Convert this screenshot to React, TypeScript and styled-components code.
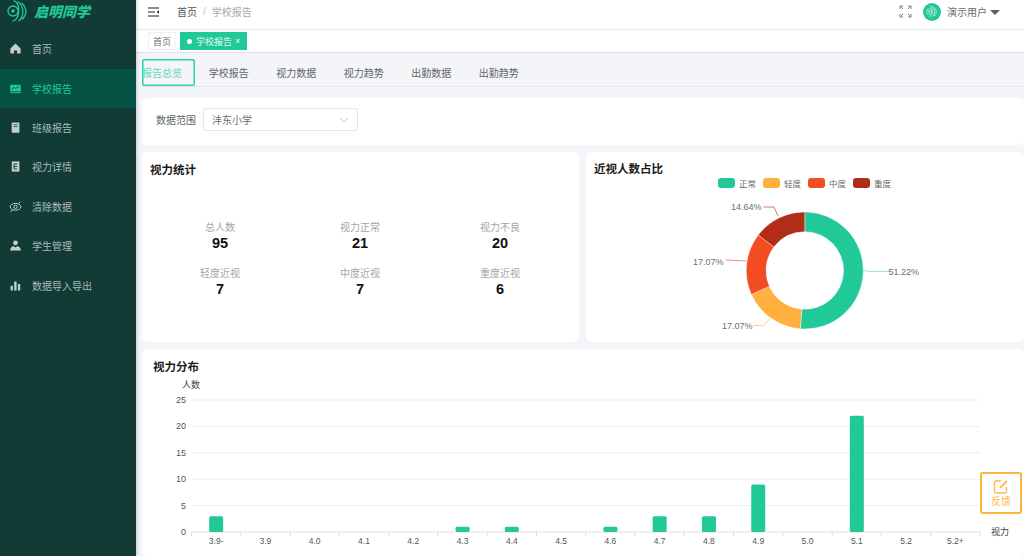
import React from "react";
import styled, { createGlobalStyle } from "styled-components";

const GlobalStyle = createGlobalStyle`
  html, body {
    margin: 0;
    padding: 0;
    height: 100%;
    overflow: hidden;
    background: #f3f5f9;
    font-family: "Liberation Sans", "Noto Sans CJK SC", sans-serif;
  }
  * { box-sizing: border-box; }
`;

const Layout = styled.div`
  display: flex;
  width: 1024px;
  height: 556px;
  overflow: hidden;
`;

const Sidebar = styled.aside`
  position: relative;
  z-index: 1;
  flex: 0 0 136px;
  height: 100%;
  background: #123b35;
  box-shadow: 1px 0 3px rgba(0, 21, 41, 0.2);
`;

const Logo = styled.div`
  display: flex;
  align-items: center;
  height: 29.6px;
  padding: 0 0 7px 7px;
  gap: 3px;
`;

const LogoText = styled.span`
  font-size: 14px;
  font-weight: 900;
  font-style: italic;
  color: #20c997;
`;

const MenuList = styled.nav`
  display: flex;
  flex-direction: column;
`;

const MenuItem = styled.div<{ $active?: boolean }>`
  display: flex;
  align-items: center;
  height: 39.4px;
  padding: 0 0 1px 9px;
  gap: 10px;
  font-size: 10px;
  color: ${(p) => (p.$active ? "#20c997" : "#a9bcb9")};
  background: ${(p) => (p.$active ? "#055244" : "transparent")};
  svg { flex: 0 0 13px; }
`;

const Main = styled.div`
  flex: 1;
  min-width: 0;
  display: flex;
  flex-direction: column;
  height: 100%;
`;

const Header = styled.header`
  flex: 0 0 30px;
  display: flex;
  align-items: center;
  justify-content: space-between;
  background: #fff;
  border-bottom: 1px solid #e8eaee;
  padding: 0 24px 6px 12px;
`;

const Crumbs = styled.div`
  display: flex;
  align-items: center;
  font-size: 10px;
  color: #505a5e;
  svg { margin-right: 17px; }
`;

const CrumbSep = styled.span`
  margin: 0 6px;
  color: #b6babd;
`;

const CrumbCurrent = styled.span`
  color: #a4a8ac;
`;

const UserBox = styled.div`
  display: flex;
  align-items: center;
  font-size: 10px;
  color: #666d70;
`;

const Avatar = styled.span`
  display: flex;
  align-items: center;
  justify-content: center;
  width: 18px;
  height: 18px;
  border-radius: 50%;
  background: #20c997;
  margin: 0 6px 0 11px;
`;

const Caret = styled.span`
  width: 0;
  height: 0;
  margin-left: 3px;
  margin-top: 2px;
  border-left: 5px solid transparent;
  border-right: 5px solid transparent;
  border-top: 5px solid #5a6063;
`;

const TagBar = styled.div`
  flex: 0 0 23px;
  display: flex;
  align-items: center;
  gap: 4px;
  padding: 0 0 0 12px;
  background: #fff;
  border-bottom: 1px solid #dfe2e6;
`;

const Tag = styled.div<{ $active?: boolean }>`
  display: flex;
  align-items: center;
  height: 18px;
  padding: 0 ${(p) => (p.$active ? "6px" : "4px")};
  font-size: 9px;
  color: ${(p) => (p.$active ? "#e7fbf5" : "#666d70")};
  background: ${(p) => (p.$active ? "#20c997" : "#fff")};
  border: 1px solid ${(p) => (p.$active ? "#20c997" : "#eef0f2")};
`;

const TagDot = styled.span`
  width: 5px;
  height: 5px;
  border-radius: 50%;
  background: #fff;
  margin-right: 4px;
`;

const TagClose = styled.span`
  margin-left: 3px;
  font-size: 9px;
  line-height: 1;
`;

const TabBar = styled.div`
  flex: 0 0 28px;
  display: flex;
  align-items: stretch;
  margin: 6px 0 0 6px;
  border-bottom: 1px solid #e4e7ec;
`;

const Tab = styled.div<{ $active?: boolean }>`
  display: flex;
  align-items: center;
  justify-content: ${(p) => (p.$active ? "flex-start" : "center")};
  width: ${(p) => (p.$active ? "53px" : "67.5px")};
  font-size: 10px;
  color: ${(p) => (p.$active ? "#5fd9b7" : "#5f6568")};
  border-radius: 2px;
  ${(p) => p.$active && "box-shadow: inset 0 0 0 1.5px #2ed3a5;"}
`;

const Content = styled.div`
  flex: 1;
  min-height: 0;
  display: flex;
  flex-direction: column;
  gap: 7px;
  padding: 11px 0 0 6px;
  overflow: hidden;
`;

const Card = styled.section`
  background: #fff;
  border-radius: 5px;
`;

const FilterCard = styled(Card)`
  flex: 0 0 47px;
  display: flex;
  align-items: center;
  gap: 7px;
  padding: 0 0 4px 14px;
  font-size: 10px;
  color: #5f6568;
`;

const Select = styled.div`
  display: flex;
  align-items: center;
  justify-content: space-between;
  width: 155px;
  height: 23px;
  padding: 0 8px 0 8px;
  border: 1px solid #e3e6ea;
  border-radius: 3px;
  color: #666d70;
`;

const Row = styled.div`
  flex: 0 0 190px;
  display: grid;
  grid-template-columns: 437px 438px;
  gap: 7px;
`;

const CardTitle = styled.h3`
  margin: 0;
  font-size: 11.5px;
  font-weight: 700;
  line-height: 16px;
  color: #1a1a1a;
`;

const StatsCard = styled(Card)`
  padding: 10px 8px;
`;

const StatsGrid = styled.div`
  display: grid;
  grid-template-columns: repeat(3, 140px);
  justify-content: start;
  row-gap: 14px;
  margin: 43px 0 0 -8px;
  padding-left: 8px;
`;

const Stat = styled.div`
  display: flex;
  flex-direction: column;
  align-items: center;
`;

const StatLabel = styled.span`
  font-size: 10px;
  line-height: 13px;
  color: #a6a6a6;
`;

const StatValue = styled.span`
  font-size: 14.5px;
  font-weight: 700;
  line-height: 19px;
  color: #111;
`;

const PieCard = styled(Card)`
  position: relative;
  padding: 9px 8px;
`;

const PieChart = styled.svg`
  position: absolute;
  left: 0;
  top: 0;
`;

const ChartCard = styled(Card)`
  flex: 1;
  min-height: 0;
  padding: 10px 11px;
  position: relative;
`;

const BarChart = styled.svg`
  position: absolute;
  left: 0;
  top: 0;
`;

const Feedback = styled.div`
  position: fixed;
  left: 980px;
  top: 472px;
  width: 42px;
  height: 42px;
  display: flex;
  flex-direction: column;
  align-items: center;
  justify-content: center;
  gap: 1px;
  background: #fff;
  border: 2px solid #fbb53c;
  border-radius: 3px;
  color: #fdb94a;
  font-size: 10px;
  line-height: 12px;
`;

const GREEN = "#20c997";

const menu = [
  { label: "首页", icon: "home" },
  { label: "学校报告", icon: "school", active: true },
  { label: "班级报告", icon: "book" },
  { label: "视力详情", icon: "detail" },
  { label: "清除数据", icon: "eye" },
  { label: "学生管理", icon: "user" },
  { label: "数据导入导出", icon: "bars" },
];

const tabs = ["学校报告", "视力数据", "视力趋势", "出勤数据", "出勤趋势"];

const stats = [
  { label: "总人数", value: 95 },
  { label: "视力正常", value: 21 },
  { label: "视力不良", value: 20 },
  { label: "轻度近视", value: 7 },
  { label: "中度近视", value: 7 },
  { label: "重度近视", value: 6 },
];

const MenuIcon = ({ name, color }: { name: string; color: string }) => {
  const p = { width: 13, height: 13, viewBox: "0 0 13 13", fill: color };
  switch (name) {
    case "home":
      return (
        <svg {...p}>
          <path d="M6.5 1.6 1.4 6.4v5.2h3.5V8.4h3.2v3.2h3.5V6.4z" />
        </svg>
      );
    case "school":
      return (
        <svg {...p}>
          <path d="M1.2 2.8h10.6v6.6H1.2z" />
          <path d="M1.2 10.2h10.6v1H1.2z" />
          <path d="M2.6 7.4 5 5.3l1.6 1.2 3.6-2.2" fill="none" stroke="#055244" strokeWidth="0.9" />
        </svg>
      );
    case "book":
      return (
        <svg {...p}>
          <path d="M3 1.5h7.4v10.2H3.6c-.5 0-.9-.4-.9-.9V1.8z" />
          <path d="M4.6 3.8h4M4.6 5.6h4" stroke="#123b35" strokeWidth="0.7" />
        </svg>
      );
    case "detail":
      return (
        <svg {...p}>
          <path d="M2.8 1.4h7.6v10.2H2.8z" />
          <path d="M5 4h3.2M5 6.5h3.2M5 9h3.2M5 4v5" stroke="#123b35" strokeWidth="0.9" fill="none" />
        </svg>
      );
    case "eye":
      return (
        <svg {...p} fill="none" stroke={color} strokeWidth="1">
          <ellipse cx="6.5" cy="6.8" rx="5.3" ry="3.4" />
          <circle cx="6.5" cy="6.8" r="1.7" />
          <path d="M11.4 1.8 9.6 3.6M3.4 10 1.6 11.8" />
        </svg>
      );
    case "user":
      return (
        <svg {...p}>
          <circle cx="6.5" cy="3.8" r="2.4" />
          <path d="M1 11.6c.4-3 2-4.4 3.6-4.6l1.9 1.4L8.4 7c1.6.2 3.2 1.6 3.6 4.6z" />
        </svg>
      );
    default:
      return (
        <svg {...p}>
          <path d="M1.6 6.8h2.3v4.7H1.6zM5.2 2.6h2.4v8.9H5.200zM8.900 5h2.300v6.500H8.900z" />
        </svg>
      );
  }
};

// concentric ring and the fish-shaped arcs of the brand mark
const LogoMark = ({ size, color }: { size: number; color: string }) => (
  <svg width={size} height={size} viewBox="0 0 24 24" fill="none" stroke={color} strokeWidth="1.3">
    <circle cx="6" cy="12" r="5" />
    <circle cx="6" cy="12" r="1.8" fill={color} stroke="none" />
    <path d="M6.5 1.5c6.5 2.5 8 17 -1 21" />
    <path d="M10.5 2.5c6.5 4 7.5 15 1 19.5" />
    <path d="M14.5 4c5.5 4.500 6 11.500 .5 16.500" />
  </svg>
);

const donut = [
  { label: "正常", color: "#20c997", value: 51.22 },
  { label: "轻度", color: "#ffb03f", value: 17.07 },
  { label: "中度", color: "#f24c22", value: 17.07 },
  { label: "重度", color: "#b12d18", value: 14.64 },
];

const polar = (cx: number, cy: number, r: number, pct: number) => {
  const a = (pct / 100) * Math.PI * 2;
  return [cx + r * Math.sin(a), cy - r * Math.cos(a)];
};

const arcPath = (from: number, to: number) => {
  const cx = 218.8;
  const cy = 118.5;
  const R = 58.5;
  const r = 38.8;
  const [x1, y1] = polar(cx, cy, R, from);
  const [x2, y2] = polar(cx, cy, R, to);
  const [x3, y3] = polar(cx, cy, r, to);
  const [x4, y4] = polar(cx, cy, r, from);
  const large = to - from > 50 ? 1 : 0;
  return `M${x1} ${y1}A${R} ${R} 0 ${large} 1 ${x2} ${y2}L${x3} ${y3}A${r} ${r} 0 ${large} 0 ${x4} ${y4}Z`;
};

const Donut = () => {
  let acc = 0;
  const segs = donut.map((d) => {
    const s = { ...d, from: acc, to: acc + d.value };
    acc += d.value;
    return s;
  });
  const legendX = [132, 177, 222, 267];
  return (
    <PieChart width={438} height={190} viewBox="0 0 438 190">
      {donut.map((d, i) => (
        <g key={d.label}>
          <rect x={legendX[i]} y={26} width={17} height={10} rx={3} fill={d.color} />
          <text x={legendX[i] + 21} y={34.5} fontSize={8.5} fill="#666">
            {d.label}
          </text>
        </g>
      ))}
      {segs.map((s) => (
        <path key={s.label} d={arcPath(s.from, s.to)} fill={s.color} stroke="#fff" strokeWidth="0.4" />
      ))}
      <path d="M277 118.5l7 1h19" fill="none" stroke="#7fe0c5" strokeWidth="0.8" />
      <text x={302.5} y={123} fontSize={9} fill="#6e6e6e">51.22%</text>
      <path d="M185.5 165l-8 8.5h-10" fill="none" stroke="#ffc56f" strokeWidth="0.8" />
      <text x={136} y={177} fontSize={9} fill="#6e6e6e">17.07%</text>
      <path d="M160.5 109l-20-1h-1" fill="none" stroke="#f0765a" strokeWidth="0.8" />
      <text x={107} y={113} fontSize={9} fill="#6e6e6e">17.07%</text>
      <path d="M192 64l-4-9h-10.5" fill="none" stroke="#c85a48" strokeWidth="0.8" />
      <text x={145} y={58} fontSize={9} fill="#6e6e6e">14.64%</text>
    </PieChart>
  );
};

const categories = ["3.9-", "3.9", "4.0", "4.1", "4.2", "4.3", "4.4", "4.5", "4.6", "4.7", "4.8", "4.9", "5.0", "5.1", "5.2", "5.2+"];
const counts = [3, 0, 0, 0, 0, 1, 1, 0, 1, 3, 3, 9, 0, 22, 0, 0];

const Bars = () => {
  // svg origin sits on the card's top-left corner (142, 349)
  const left = 49.5;
  const right = 838;
  const top = 51;
  const base = 183;
  const step = (right - left) / categories.length;
  const unit = (base - top) / 25;
  return (
    <BarChart width={882} height={207} viewBox="0 0 882 207">
      <text x={40} y={39} fontSize={9} fill="#444">人数</text>
      {[0, 5, 10, 15, 20, 25].map((v) => {
        const y = base - v * unit;
        return (
          <g key={v}>
            <text x={44} y={y + 3} fontSize={9} textAnchor="end" fill="#555">{v}</text>
            {v > 0 && <line x1={left} x2={right} y1={y} y2={y} stroke="#eceef5" strokeWidth="1" />}
          </g>
        );
      })}
      <line x1={left} x2={right} y1={base} y2={base} stroke="#dcdfe2" strokeWidth="1" />
      {categories.map((c, i) => (
        <g key={c}>
          <line x1={left + i * step} x2={left + i * step} y1={base} y2={base + 4} stroke="#dcdfe2" />
          <text x={left + (i + 0.5) * step} y={base + 12} fontSize={8.5} textAnchor="middle" fill="#555">{c}</text>
          {counts[i] > 0 && (
            <rect
              x={left + (i + 0.5) * step - 7}
              y={base - counts[i] * unit}
              width={14}
              height={counts[i] * unit}
              rx={1.5}
              fill={GREEN}
            />
          )}
        </g>
      ))}
      <line x1={right} x2={right} y1={base} y2={base + 4} stroke="#dcdfe2" />
      <text x={849} y={186} fontSize={9} fill="#444">视力</text>
    </BarChart>
  );
};

export default function App() {
  return (
    <>
      <GlobalStyle />
      <Layout>
        <Sidebar>
          <Logo>
            <LogoMark size={24} color={GREEN} />
            <LogoText>启明同学</LogoText>
          </Logo>
          <MenuList>
            {menu.map((m) => (
              <MenuItem key={m.label} $active={m.active}>
                <MenuIcon name={m.icon} color={m.active ? GREEN : "#c3d0ce"} />
                {m.label}
              </MenuItem>
            ))}
          </MenuList>
        </Sidebar>
        <Main>
          <Header>
            <Crumbs>
              <svg width="12" height="12" viewBox="0 0 12 12" fill="#222">
                <path d="M0 1.5h11v1.100H0zM0 5.500h7v1.100H0zM0 9.500h11v1.100H0zM11 4.300v3.400L8.600 6z" />
              </svg>
              首页
              <CrumbSep>/</CrumbSep>
              <CrumbCurrent>学校报告</CrumbCurrent>
            </Crumbs>
            <UserBox>
              <svg width="13" height="13" viewBox="0 0 13 13" fill="none" stroke="#777" strokeWidth="0.9">
                <path d="M1 4V1h3M1 1l3 3M12 4V1H9M12 1 9 4M1 9v3h3M1 12l3-3M12 9v3H9M12 12 9 9" />
              </svg>
              <Avatar>
                <LogoMark size={13} color="#d6f7ec" />
              </Avatar>
              演示用户
              <Caret />
            </UserBox>
          </Header>
          <TagBar>
            <Tag>首页</Tag>
            <Tag $active>
              <TagDot />
              学校报告
              <TagClose>×</TagClose>
            </Tag>
          </TagBar>
          <TabBar>
            <Tab $active>报告总览</Tab>
            {tabs.map((t) => (
              <Tab key={t}>{t}</Tab>
            ))}
          </TabBar>
          <Content>
            <FilterCard>
              数据范围
              <Select>
                沣东小学
                <svg width="10" height="6" viewBox="0 0 10 6" fill="none" stroke="#c4c7cb" strokeWidth="1">
                  <path d="M1 1l4 4 4-4" />
                </svg>
              </Select>
            </FilterCard>
            <Row>
              <StatsCard>
                <CardTitle>视力统计</CardTitle>
                <StatsGrid>
                  {stats.map((s) => (
                    <Stat key={s.label}>
                      <StatLabel>{s.label}</StatLabel>
                      <StatValue>{s.value}</StatValue>
                    </Stat>
                  ))}
                </StatsGrid>
              </StatsCard>
              <PieCard>
                <CardTitle>近视人数占比</CardTitle>
                <Donut />
              </PieCard>
            </Row>
            <ChartCard>
              <CardTitle>视力分布</CardTitle>
              <Bars />
            </ChartCard>
          </Content>
        </Main>
      </Layout>
      <Feedback>
        <svg width="16" height="16" viewBox="0 0 16 16" fill="none" stroke="#fdb94a" strokeWidth="1.4">
          <path d="M8 2H3a1.5 1.5 0 0 0-1.5 1.5v9A1.5 1.5 0 0 0 3 14h9a1.5 1.5 0 0 0 1.5-1.5V8" />
          <path d="M14 2 7 9" strokeWidth="1.8" />
        </svg>
        反馈
      </Feedback>
    </>
  );
}
